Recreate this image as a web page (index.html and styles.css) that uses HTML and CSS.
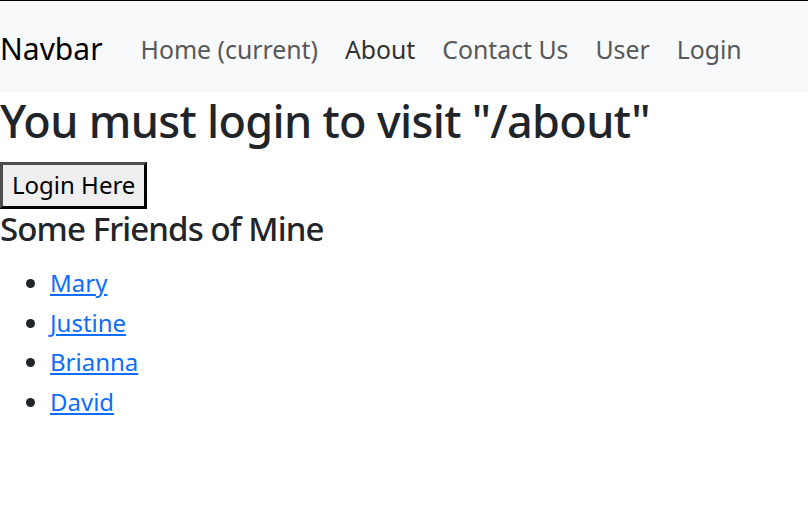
FILE: index.html
```html
<!DOCTYPE html>
<html lang="en">
<head>
<meta charset="utf-8">
<title>About</title>
<link rel="stylesheet" href="styles.css">
</head>
<body>
<nav class="navbar">
  <a class="brand" href="#">Navbar</a>
  <ul class="nav">
    <li><a class="nav-link" href="#">Home (current)</a></li>
    <li><a class="nav-link hover" href="#">About</a></li>
    <li><a class="nav-link" href="#">Contact Us</a></li>
    <li><a class="nav-link" href="#">User</a></li>
    <li><a class="nav-link" href="#">Login</a></li>
  </ul>
</nav>
<h1 class="title">You must login to visit "/about"</h1>
<button class="login-btn" type="button">Login Here</button>
<h4 class="friends-title">Some Friends of Mine</h4>
<ul class="friends">
  <li><a href="#">Mary</a></li>
  <li><a href="#">Justine</a></li>
  <li><a href="#">Brianna</a></li>
  <li><a href="#">David</a></li>
</ul>
</body>
</html>
```
FILE: styles.css
```css
* { box-sizing: border-box; }
html, body { margin: 0; padding: 0; }
body {
  border-top: 1px solid #000;
  background: #fff;
  color: #212529;
  font-family: "Noto Sans", "Open Sans", sans-serif;
  font-size: 24px;
  line-height: 1.5;
}
.navbar {
  display: flex;
  align-items: center;
  height: 91px;
  padding-top: 4px;
  background: #f8f9fa;
}
.brand {
  font-size: 30px;
  line-height: 45px;
  color: #000;
  text-decoration: none;
  margin-right: 24.5px;
}
.nav {
  display: flex;
  list-style: none;
  margin: 0;
  padding: 0;
}
.nav-link {
  display: block;
  padding: 0 13.5px;
  font-size: 24.8px;
  line-height: 36px;
  color: #575859;
  text-decoration: none;
}
.nav-link.hover { color: #323232; }
.title {
  margin: 0 0 15.7px;
  padding-top: 2px;
  height: 54px;
  font-size: 45px;
  line-height: 54px;
  font-weight: 500;
  letter-spacing: -0.015em;
  white-space: nowrap;
}
.login-btn {
  display: block;
  margin: 0;
  padding: 2.8px 9px;
  font: inherit;
  line-height: 36px;
  color: #000;
  background: #efefef;
  border-style: solid;
  border-width: 3px;
  border-color: #4d4d4d #000 #000 #4d4d4d;
  border-radius: 0;
}
.friends-title {
  margin: 0 0 14px;
  font-size: 33px;
  line-height: 39.6px;
  font-weight: 500;
  letter-spacing: -0.027em;
}
.friends {
  margin: 0;
  padding-left: 50px;
}
.friends li { line-height: 39.8px; }
.friends a { color: #0d6efd; }
```
